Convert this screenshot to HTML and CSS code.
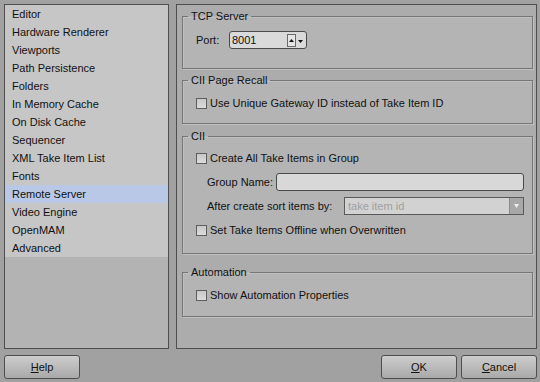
FILE: index.html
```html
<!DOCTYPE html>
<html lang="en">

<head>
    <meta charset="UTF-8">
    <title>Preferences</title>
    <link rel="stylesheet" href="styles.css">
</head>

<body>
    <div class="dialog">
        <div class="main">
            <div class="side">
                <ul class="nav">
                    <li>Editor</li>
                    <li>Hardware Renderer</li>
                    <li>Viewports</li>
                    <li>Path Persistence</li>
                    <li>Folders</li>
                    <li>In Memory Cache</li>
                    <li>On Disk Cache</li>
                    <li>Sequencer</li>
                    <li>XML Take Item List</li>
                    <li>Fonts</li>
                    <li class="active">Remote Server</li>
                    <li>Video Engine</li>
                    <li>OpenMAM</li>
                    <li>Advanced</li>
                </ul>
            </div>

            <div class="page">
                <fieldset class="group group-tcp">
                    <legend>TCP Server</legend>
                    <div class="row">
                        <label class="port-label" for="port">Port:</label>
                        <div class="spin">
                            <span class="spin-value">8001</span>
                            <span class="spin-btn up">
                                <svg width="5" height="3" viewBox="0 0 5 3"><path d="M0 3 L2.5 0 L5 3 Z" fill="#111"/></svg>
                            </span>
                            <span class="spin-btn down">
                                <svg width="5" height="3" viewBox="0 0 5 3"><path d="M0 0 L5 0 L2.5 3 Z" fill="#111"/></svg>
                            </span>
                        </div>
                    </div>
                </fieldset>

                <fieldset class="group group-recall">
                    <legend>CII Page Recall</legend>
                    <div class="row">
                        <span class="check"></span>
                        <span>Use Unique Gateway ID instead of Take Item ID</span>
                    </div>
                </fieldset>

                <fieldset class="group group-cii">
                    <legend>CII</legend>
                    <div class="row">
                        <span class="check"></span>
                        <span>Create All Take Items in Group</span>
                    </div>
                    <div class="row sub">
                        <span class="field-label name-label">Group Name:</span>
                        <span class="text-input"></span>
                    </div>
                    <div class="row sub">
                        <span class="field-label sort-label">After create sort items by:</span>
                        <span class="select">
                            <span class="select-value">take item id</span>
                            <span class="select-arrow">
                                <svg width="5" height="4" viewBox="0 0 5 4"><path d="M0 0 L5 0 L2.5 4 Z" fill="#eee"/></svg>
                            </span>
                        </span>
                    </div>
                    <div class="row">
                        <span class="check"></span>
                        <span>Set Take Items Offline when Overwritten</span>
                    </div>
                </fieldset>

                <fieldset class="group group-auto">
                    <legend>Automation</legend>
                    <div class="row">
                        <span class="check"></span>
                        <span>Show Automation Properties</span>
                    </div>
                </fieldset>
            </div>
        </div>

        <div class="footer">
            <button class="btn"><u>H</u>elp</button>
            <div class="footer-right">
                <button class="btn"><u>O</u>K</button>
                <button class="btn"><u>C</u>ancel</button>
            </div>
        </div>
    </div>
</body>

</html>
```

FILE: styles.css
```css
body {
    margin: 0;
    background: #a1a1a1;
    font-family: "Liberation Sans", Arial, sans-serif;
    font-size: 11px;
    color: #111;
}

.dialog {
    padding: 4px 3px 4px 4px;
}

.main {
    display: flex;
    gap: 7px;
    height: 345px;
}

.side {
    width: 165px;
    box-sizing: border-box;
    border: 1px solid #4e4e4e;
    background: #b3b3b3;
}

.nav {
    list-style: none;
    margin: 0;
    padding: 0;
    background: #c6c6c6;
}

.nav li {
    height: 18px;
    line-height: 18px;
    padding-left: 7px;
}

.nav li.active {
    background: #b9c8e6;
}

.page {
    width: 361px;
    box-sizing: border-box;
    border: 1px solid #4e4e4e;
    background: #acacac;
    padding: 5px 3px 0 5px;
}

.group {
    margin: 0;
    padding: 0 8px 0 13px;
    border: 1px solid #767676;
    box-shadow: inset 1px 1px 0 #c0c0c0, 1px 1px 0 #c0c0c0;
    background: #b4b4b4;
    min-width: 0;
}

.group legend {
    margin-left: -8px;
    padding: 0 3px;
    line-height: 13px;
}

.group-tcp {
    padding: 8px 8px 19px 8px;
}

.group-tcp legend {
    margin-left: -3px;
}

.group-recall {
    margin-top: 5px;
    padding-top: 7px;
    padding-bottom: 11px;
}

.group-cii {
    margin-top: 6px;
    padding-top: 6px;
    padding-bottom: 14px;
}

.group-auto {
    margin-top: 12px;
    padding-top: 7px;
    padding-bottom: 12px;
}

.row {
    display: flex;
    align-items: center;
    height: 18px;
}

.group-cii .row + .row {
    margin-top: 6px;
}

.row.sub {
    padding-left: 11px;
}

.port-label {
    width: 33px;
    padding-left: 5px;
}

.spin {
    display: flex;
    align-items: center;
    width: 78px;
    height: 18px;
    box-sizing: border-box;
    border: 1px solid #4a4a4a;
    border-radius: 3px;
    background: #dadada;
    padding-left: 2px;
}

.spin-value {
    flex: 1;
}

.spin-btn {
    display: flex;
    align-items: center;
    justify-content: center;
    width: 9px;
    height: 13px;
    box-sizing: border-box;
}

.spin-btn.up {
    border: 1px solid #6a6a6a;
    background: #e6e6e6;
}

.spin-btn.down {
    margin-right: 1px;
    padding-top: 2px;
}

.check {
    width: 11px;
    height: 11px;
    box-sizing: border-box;
    border: 1px solid #5e5e5e;
    background: linear-gradient(#c8c8c8, #dcdcdc);
    margin-right: 3px;
    flex: none;
}

.field-label {
    flex: none;
}

.name-label {
    width: 69px;
}

.sort-label {
    width: 137px;
}

.text-input {
    flex: 1;
    height: 18px;
    box-sizing: border-box;
    border: 1px solid #4a4a4a;
    border-radius: 3px;
    background: #d8d8d8;
}

.select {
    flex: 1;
    display: flex;
    height: 18px;
    box-sizing: border-box;
    border: 1px solid #5a5a5a;
    background: #d2d2d2;
}

.select-value {
    flex: 1;
    padding-left: 3px;
    line-height: 16px;
    color: #a0a0a0;
}

.select-arrow {
    width: 13px;
    display: flex;
    align-items: center;
    justify-content: center;
    border-left: 1px solid #8a8a8a;
    background: #a8a8a8;
}

.footer {
    display: flex;
    justify-content: space-between;
    margin-top: 6px;
}

.footer-right {
    display: flex;
    gap: 4px;
}

.btn {
    width: 76px;
    height: 24px;
    padding: 0;
    border: 1px solid #4e4e4e;
    border-radius: 3px;
    background: linear-gradient(#cdcdcd, #a9a9a9);
    font-family: inherit;
    font-size: 11px;
    color: #111;
}
```
